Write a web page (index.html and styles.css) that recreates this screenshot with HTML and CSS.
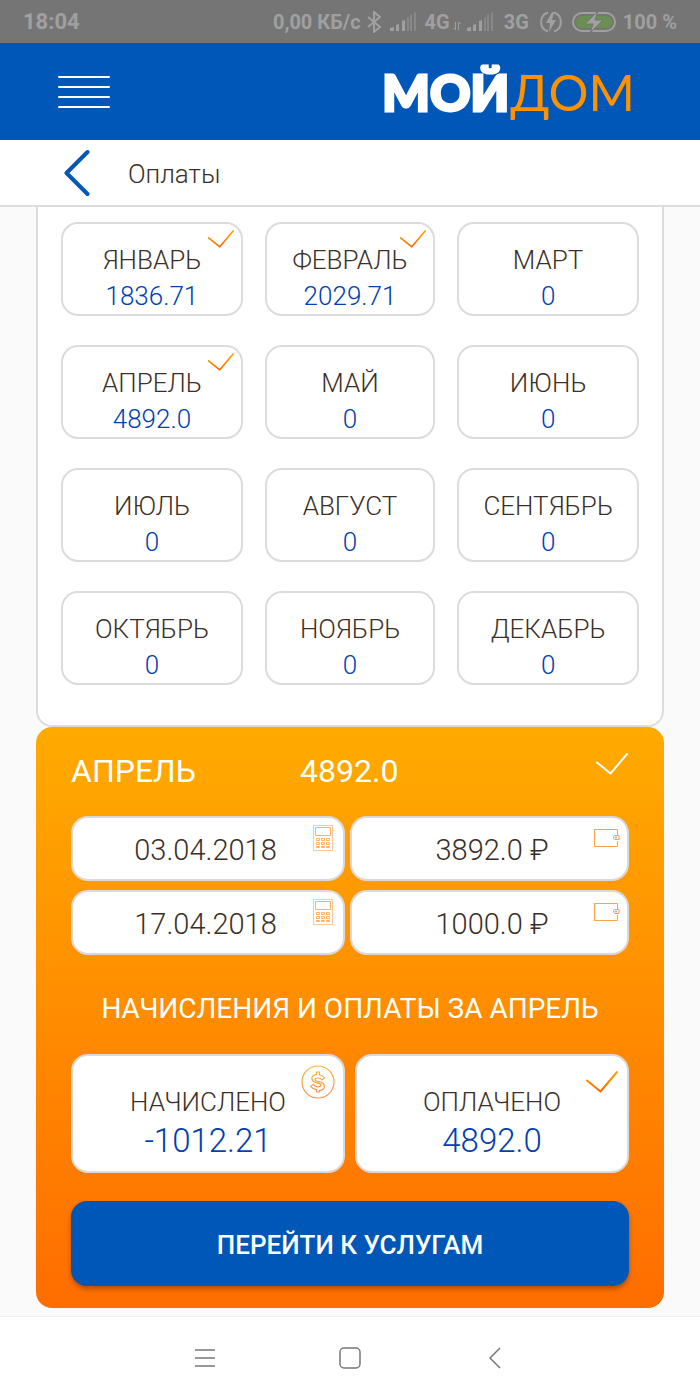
FILE: index.html
```html
<!DOCTYPE html>
<html lang="ru">
  <head>
    <meta charset="UTF-8" />
    <meta name="viewport" content="width=device-width, initial-scale=1.0" />
    <title>Мой Дом - Оплаты</title>
    <link rel="stylesheet" href="styles.css">
  </head>
  <body>
    <!-- shared icons -->
    <svg class="defs" width="0" height="0" aria-hidden="true">
      <defs>
        <linearGradient id="grad" gradientUnits="userSpaceOnUse" x1="0" y1="0" x2="0" y2="20">
          <stop offset="0" stop-color="#ffab00" />
          <stop offset="1" stop-color="#ff6d00" />
        </linearGradient>
        <linearGradient id="gradCoin" gradientUnits="userSpaceOnUse" x1="0" y1="0" x2="0" y2="34">
          <stop offset="0" stop-color="#ffb733" />
          <stop offset="1" stop-color="#ff8a50" />
        </linearGradient>
        <symbol id="check" viewBox="0 0 34 24">
          <path d="M2 10.500 L15.500 21.500 L32 2" fill="none" stroke-width="2" stroke-linecap="round" stroke-linejoin="round" />
        </symbol>
        <symbol id="calc" viewBox="0 0 20 26">
          <g fill="none" stroke="#ffb066" stroke-width="1">
            <path d="M.5 .5h19v25h-19z" stroke="#ffc898" />
            <path d="M2.500 2.500h15v8h-15z" />
            <path d="M3.500 13.500h3v2h-3zM8.500 13.500h3v2h-3zM13.500 13.500h3v2h-3zM3.500 17.500h3v2h-3zM8.500 17.500h3v2h-3zM13.500 17.500h3v2h-3zM3.500 21.500h3v1h-3zM8.500 21.500h3v1h-3zM13.500 21.500h3v1h-3z" />
          </g>
        </symbol>
        <symbol id="wallet" viewBox="0 0 26 18">
          <g fill="none" stroke="#ffa14a" stroke-width="1">
            <path d="M23.500 6v-5.500h-23v17h23v-5.500" />
            <path d="M19.500 7.500l1-1h4.500v4h-4.500l-1-1z" />
            <path d="M21 8h1.500v1h-1.500z" />
          </g>
        </symbol>
        <symbol id="signal" viewBox="0 0 27 19">
          <path d="M0 19v-3l4-1v4zM6 19v-6l3-1v7zM12 19v-10l3-1v11z" fill="#a0a0a0" />
          <path d="M17 19v-13l2-1v14zM20 19v-16l2-1v17zM24 19v-18l2-1v19z" fill="#888" />
        </symbol>
      </defs>
    </svg>

    <div class="status">
      <span class="time">18:04</span>
      <span class="speed">0,00 КБ/с</span>
      <svg class="bt" width="14" height="22" viewBox="0 0 14 22"><path d="M1 6l12 10-6 5V1l6 5L1 16" fill="none" stroke="#a0a0a0" stroke-width="2" /></svg>
      <svg class="signal" width="27" height="19"><use href="#signal" /></svg>
      <span class="net">4G</span>
      <svg class="arrows" width="8" height="10" viewBox="0 0 8 10"><path d="M2.500 1v8M.5 7l2 2M5.500 9V1M7.500 3l-2-2" fill="none" stroke="#a0a0a0" /></svg>
      <svg class="signal" width="27" height="19"><use href="#signal" /></svg>
      <span class="net net2">3G</span>
      <svg class="bolt" width="22" height="22" viewBox="0 0 22 22">
        <path d="M8 1.500a10 10 0 0 0 0 19M14 1.500a10 10 0 0 1 0 19" fill="none" stroke="#a0a0a0" stroke-width="2" />
        <path d="M12 1L6 12h4l-1 9 7-12h-4l2-8z" fill="#a0a0a0" />
      </svg>
      <svg class="battery" width="44" height="22" viewBox="0 0 44 22">
        <rect x="1" y="2" width="42" height="18" rx="9" fill="none" stroke="#a0a0a0" stroke-width="2" />
        <rect x="4" y="5" width="36" height="12" rx="6" fill="#6a8f52" />
        <path d="M26 0L13 13h8l-3 9 13-13h-8l3-9z" fill="#a0a0a0" stroke="#757575" stroke-width="1" />
      </svg>
      <span class="percent">100 %</span>
    </div>

    <header class="header">
      <button type="button" class="menu" aria-label="Меню"><i></i><i></i><i></i><i></i></button>
      <a href="#" class="logo"><b>МОЙ</b><span>ДОМ</span></a>
    </header>

    <div class="title">
      <a href="#" class="back" aria-label="Назад">
        <svg width="26" height="48" viewBox="0 0 26 48"><path d="M23.500 3L2.500 24l21 21" fill="none" stroke="#0057b8" stroke-width="4" stroke-linecap="round" stroke-linejoin="round" /></svg>
      </a>
      <h1>Оплаты</h1>
    </div>

    <main>
      <div class="months">
        <button type="button" class="month">ЯНВАРЬ<span>1836.71</span><svg class="check"><use href="#check" /></svg></button>
        <button type="button" class="month">ФЕВРАЛЬ<span>2029.71</span><svg class="check"><use href="#check" /></svg></button>
        <button type="button" class="month">МАРТ<span>0</span></button>
        <button type="button" class="month">АПРЕЛЬ<span>4892.0</span><svg class="check"><use href="#check" /></svg></button>
        <button type="button" class="month">МАЙ<span>0</span></button>
        <button type="button" class="month">ИЮНЬ<span>0</span></button>
        <button type="button" class="month">ИЮЛЬ<span>0</span></button>
        <button type="button" class="month">АВГУСТ<span>0</span></button>
        <button type="button" class="month">СЕНТЯБРЬ<span>0</span></button>
        <button type="button" class="month">ОКТЯБРЬ<span>0</span></button>
        <button type="button" class="month">НОЯБРЬ<span>0</span></button>
        <button type="button" class="month">ДЕКАБРЬ<span>0</span></button>
      </div>

      <section class="detail">
        <div class="detail-head">
          <h2>АПРЕЛЬ</h2>
          <span class="sum">4892.0</span>
          <svg class="check-white" width="34" height="24"><use href="#check" /></svg>
        </div>

        <div class="payments">
          <div class="box date">03.04.2018<svg class="calc"><use href="#calc" /></svg></div>
          <div class="box amount">3892.0 ₽<svg class="wallet"><use href="#wallet" /></svg></div>
          <div class="box date">17.04.2018<svg class="calc"><use href="#calc" /></svg></div>
          <div class="box amount">1000.0 ₽<svg class="wallet"><use href="#wallet" /></svg></div>
        </div>

        <h3>НАЧИСЛЕНИЯ И ОПЛАТЫ ЗА АПРЕЛЬ</h3>

        <div class="totals">
          <div class="box total">НАЧИСЛЕНО<span>-1012.21</span>
            <svg class="coin" viewBox="0 0 34 34">
              <g fill="none" stroke="url(#gradCoin)">
                <circle cx="17" cy="17" r="16" stroke-width="1.200" />
                <path d="M15.500 7h3v3c2.500.3 4 1.500 5 3l-2.500 2c-1-1.400-2.200-2-4-2-2 0-3 .7-3 1.700 0 1.200 1.500 1.500 3.800 2 3 .6 5.500 1.500 5.500 4.500 0 2.400-1.800 4-4.800 4.400V27h-3v-2.400c-2.600-.3-4.500-1.500-5.700-3.300l2.500-2c1.200 1.600 2.600 2.500 4.700 2.500 2 0 3-.6 3-1.700 0-1.200-1.500-1.500-3.700-2-3-.6-5.400-1.600-5.400-4.500 0-2.200 1.700-3.800 4.600-4.300z" stroke-width="1.200" />
              </g>
            </svg>
          </div>
          <div class="box total">ОПЛАЧЕНО<span>4892.0</span><svg class="check"><use href="#check" /></svg></div>
        </div>

        <button type="button" class="go">ПЕРЕЙТИ К УСЛУГАМ</button>
      </section>
    </main>

    <nav class="navbar">
      <button type="button" aria-label="Приложения"><svg width="20" height="20" viewBox="0 0 20 20"><path d="M0 2h20M0 10h20M0 18h20" stroke="#777" stroke-width="1.500" /></svg></button>
      <button type="button" aria-label="Домой"><svg width="22" height="22" viewBox="0 0 22 22"><rect x="1" y="1" width="20" height="20" rx="4" fill="none" stroke="#777" stroke-width="1.500" /></svg></button>
      <button type="button" aria-label="Назад"><svg width="12" height="22" viewBox="0 0 12 22"><path d="M11 1L1 11l10 10" fill="none" stroke="#777" stroke-width="1.500" /></svg></button>
    </nav>
  </body>
</html>
```
FILE: styles.css
```css
* {
  box-sizing: border-box;
}
body {
  margin: 0;
  min-height: 100vh;
  display: flex;
  flex-direction: column;
  background: #fafafa;
  color: #3b3028;
  font-family: Roboto, sans-serif;
}
button {
  font-family: inherit;
  color: inherit;
  cursor: pointer;
}
h1, h2, h3 {
  margin: 0;
  font-weight: 400;
}
.defs {
  position: absolute;
}

/* status bar */
.status {
  display: flex;
  align-items: center;
  height: 43px;
  padding: 0 23px;
  background: #757575;
  color: #a0a0a0;
  font-size: 20px;
  font-weight: 700;
}
.time {
  margin-right: auto;
  font-size: 22px;
}
.bt {
  margin: 0 9px 0 6px;
}
.net {
  margin-left: 8px;
}
.arrows {
  margin: 8px 6px 0 3px;
}
.net2 {
  margin-left: 10px;
}
.bolt {
  margin: 0 10px 0 11px;
}
.percent {
  margin-left: 7px;
}

/* header */
.header {
  display: flex;
  justify-content: space-between;
  align-items: center;
  height: 97px;
  padding: 0 65px 0 58px;
  background: #0057b8;
}
.menu {
  display: grid;
  gap: 8px;
  width: 52px;
  padding: 0;
  border: 0;
  background: none;
}
.menu i {
  height: 2px;
  border-radius: 1px;
  background: #fff;
}
.logo {
  display: flex;
  gap: 1px;
  font-family: Lato, sans-serif;
  font-size: 50px;
  line-height: 60px;
  text-decoration: none;
  color: #ff9100;
}
.logo b {
  font-weight: 900;
  color: #fff;
  -webkit-text-stroke: 3px #fff;
}
.logo span {
  font-weight: 400;
}

.title {
  display: flex;
  align-items: center;
  height: 67px;
  padding: 0 64px;
  border-bottom: 2px solid #dcdcdc;
  background: #fff;
}
.back {
  display: flex;
  margin-right: 38px;
}
.title h1 {
  padding-top: 2px;
  font-size: 26px;
  font-weight: 300;
}

main {
  flex: 1;
  padding: 0 36px 8px;
}

/* months */
.months {
  display: grid;
  grid-template-columns: 16fr 15fr 16fr;
  gap: 29px 22px;
  padding: 15px 23px 40px;
  border: 2px solid #dcdcdc;
  border-top: 0;
  border-radius: 0 0 16px 16px;
  background: #fff;
}
.month {
  position: relative;
  height: 94px;
  padding: 18px 0 0;
  border: 2px solid #dcdcdc;
  border-radius: 17px;
  background: #fff;
  font-size: 26px;
  font-weight: 300;
  line-height: 36px;
  text-align: center;
}
.month span,
.total span {
  display: block;
  color: #0040b0;
}
.check {
  position: absolute;
  top: 5px;
  right: 6px;
  width: 28px;
  height: 20px;
  stroke: url(#grad);
}

/* selected month */
.detail {
  padding: 24px 35px 22px;
  border-radius: 16px;
  background: linear-gradient(#ffab00, #ff6d00);
}
.detail-head {
  display: grid;
  grid-template-columns: 229px 1fr auto;
  height: 65px;
  font-size: 32px;
  line-height: 40px;
  color: #fff;
}
.detail-head h2 {
  font-size: 32px;
}
.check-white {
  margin-top: 1px;
  stroke: #fff;
}
.payments {
  display: grid;
  grid-template-columns: 274fr 279fr;
  gap: 9px 5px;
}
.box {
  position: relative;
  height: 65px;
  border: 2px solid #dcd8d8;
  border-radius: 17px;
  background: #fff;
  font-size: 29px;
  font-weight: 300;
  line-height: 65px;
  text-align: center;
}
.date {
  padding-right: 5px;
}
.amount {
  padding-left: 5px;
}
.calc {
  position: absolute;
  top: 7px;
  right: 10px;
  width: 20px;
  height: 26px;
}
.wallet {
  position: absolute;
  top: 11px;
  right: 7px;
  width: 26px;
  height: 18px;
}
.detail h3 {
  padding: 33px 0 24px;
  font-size: 28px;
  line-height: 42px;
  text-align: center;
  color: #fff;
}
.totals {
  display: grid;
  grid-template-columns: 1fr 1fr;
  gap: 10px;
}
.total {
  height: 119px;
  padding-top: 25px;
  font-size: 26px;
  line-height: 42px;
}
.total span {
  font-size: 33px;
  line-height: 36px;
}
.total .check {
  top: 14px;
  right: 8px;
  width: 34px;
  height: 24px;
}
.coin {
  position: absolute;
  top: 9px;
  right: 8px;
  width: 34px;
  height: 34px;
}
.go {
  display: block;
  width: 100%;
  height: 85px;
  margin-top: 28px;
  padding: 3px 0 0;
  border: 0;
  border-radius: 16px;
  background: #0057b8;
  box-shadow: 0 3px 5px rgba(0, 0, 0, 0.3);
  font-size: 26px;
  font-weight: 500;
  color: #fff;
}

/* bottom navigation */
.navbar {
  display: grid;
  grid-template-columns: 1fr 1fr 1fr;
  height: 84px;
  padding: 2px 132px 0;
  border-top: 1px solid #f0f0f0;
  background: #fff;
}
.navbar button {
  border: 0;
  background: none;
}
```
